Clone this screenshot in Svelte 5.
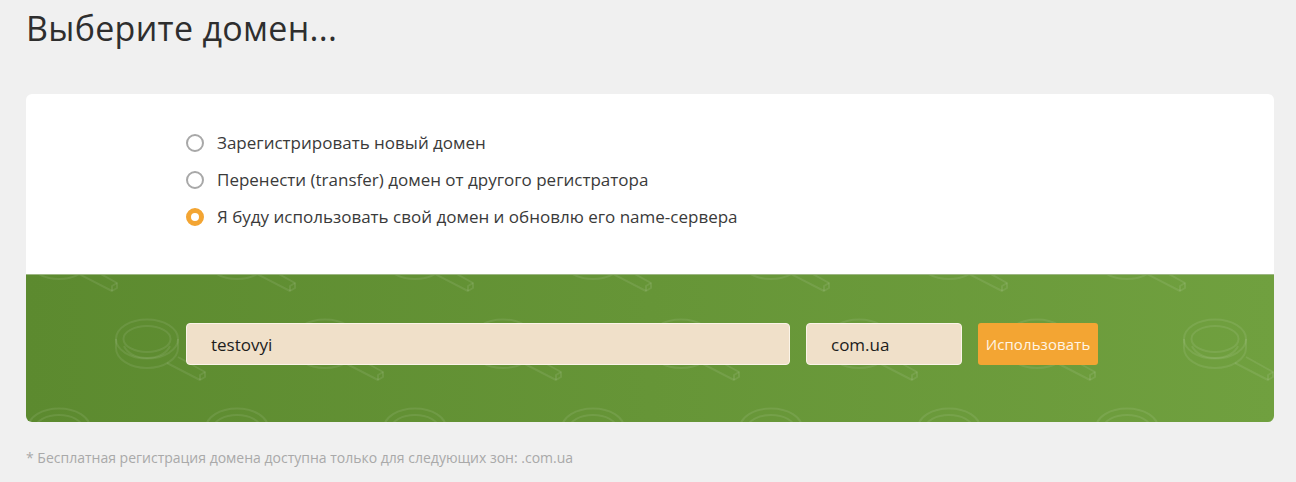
<script>
    let choice = $state('own');
    let domain = $state('testovyi');
    let zone = $state('com.ua');

    const options = [
        { id: 'new', label: 'Зарегистрировать новый домен' },
        { id: 'transfer', label: 'Перенести (transfer) домен от другого регистратора' },
        { id: 'own', label: 'Я буду использовать свой домен и обновлю его name-сервера' }
    ];

    // staggered rows of the magnifier background
    const loupes = [];
    for (let row = 0; row < 3; row++) {
        for (let col = 0; col < 8; col++) {
            loupes.push({ x: col * 178 + (row === 1 ? 90 : 2), y: row * 89 - 45 });
        }
    }
</script>

<main class="page">
    <h1>Выберите домен...</h1>

    <section class="card">
        <div class="options">
            {#each options as option}
                <label class="option">
                    <input type="radio" name="domain-mode" value={option.id} bind:group={choice} />
                    <span class="dot"></span>
                    <span>{option.label}</span>
                </label>
            {/each}
        </div>

        <form class="search" onsubmit={(e) => e.preventDefault()}>
            <svg class="pattern" width="100%" height="100%" aria-hidden="true">
                <defs>
                    <g id="loupe" fill="none" stroke="#fff" stroke-opacity="0.085" stroke-width="2" stroke-linejoin="round">
                        <ellipse cx="31" cy="20" rx="31" ry="19.5" />
                        <ellipse cx="31" cy="20" rx="23.5" ry="13" />
                        <path d="M0 20v9c0 11 14 20 31 20s31-9 31-20v-9" />
                        <path d="M8 27c3 7 12 12 23 12s20-5 23-12" />
                        <path d="M51 44l33 17 5-3v-5l-27-15" />
                        <path d="M84 61v-5l5-3" />
                    </g>
                </defs>
                {#each loupes as l}
                    <use href="#loupe" x={l.x} y={l.y} />
                {/each}
            </svg>
            <input class="field domain" type="text" bind:value={domain} />
            <input class="field zone" type="text" bind:value={zone} />
            <button type="submit">Использовать</button>
        </form>
    </section>

    <p class="note">* Бесплатная регистрация домена доступна только для следующих зон: .com.ua</p>
</main>

<style>
    :global(body) {
        background: #f0f0f0;
        font-family: "Open Sans", "Noto Sans", sans-serif;
        color: #333;
    }

    .page {
        padding: 0 22px 0 26px;
    }

    h1 {
        margin: 0;
        padding: 4px 0 42px;
        font-size: 34px;
        line-height: 48px;
        letter-spacing: 0.3px;
        font-weight: 400;
        color: #2e2e2e;
    }

    .card {
        border-radius: 6px;
        overflow: hidden;
        background: #fff;
    }

    .options {
        display: flex;
        flex-direction: column;
        gap: 15px;
        height: 180px;
        box-sizing: border-box;
        padding: 38px 0 0 160px;
    }

    .option {
        display: flex;
        align-items: center;
        gap: 13px;
        font-size: 17px;
        line-height: 22px;
        color: #3a3a3a;
    }

    .option input {
        display: none;
    }

    .dot {
        width: 18px;
        height: 18px;
        box-sizing: border-box;
        border: 2px solid #a8a8a8;
        border-radius: 50%;
        background: #fff;
    }

    .option input:checked + .dot {
        border: 5px solid #f3a533;
    }

    .search {
        position: relative;
        display: flex;
        gap: 16px;
        height: 148px;
        box-sizing: border-box;
        padding: 48px 0 0 160px;
        border-top: 1px solid #9db783;
        background: linear-gradient(90deg, #5c8a2f 0%, #70a03f 100%);
    }

    .pattern {
        position: absolute;
        inset: 0;
        filter: blur(0.6px);
    }

    .field {
        position: relative;
        height: 42px;
        box-sizing: border-box;
        padding: 0 24px;
        border: 1px solid #fbf4e8;
        border-radius: 4px;
        background: #f0e0c9;
        color: #1c1c1c;
        font: 400 17px "Open Sans", sans-serif;
    }

    .domain {
        width: 604px;
    }

    .zone {
        width: 156px;
    }

    button {
        position: relative;
        width: 120px;
        height: 42px;
        padding: 0;
        border: 0;
        border-radius: 3px;
        background: #f3a533;
        color: #fff5e6;
        font: 400 15px "Open Sans", sans-serif;
        letter-spacing: 0.1px;
        cursor: pointer;
    }

    .note {
        margin: 27px 0 0;
        font-size: 14px;
        line-height: 18px;
        color: #a9a9a9;
    }
</style>
